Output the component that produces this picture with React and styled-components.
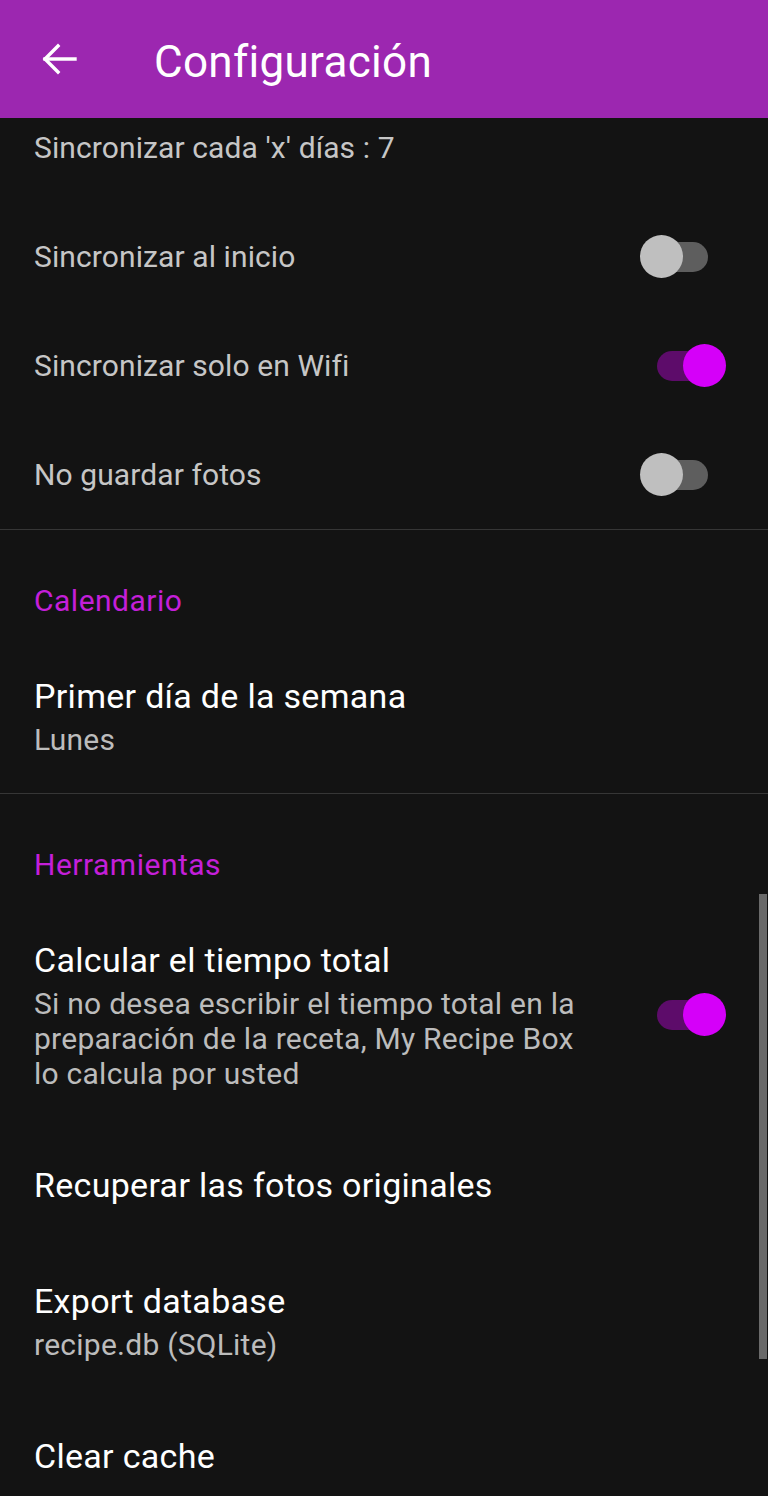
import React from "react";
import styled, { createGlobalStyle } from "styled-components";

const GlobalStyle = createGlobalStyle`
	html, body {
		margin: 0;
		padding: 0;
		background: #131313;
	}
	body {
		font-family: Roboto, "Noto Sans", sans-serif;
	}
`;

const Screen = styled.div`
	position: relative;
	width: 768px;
	height: 1496px;
	display: flex;
	flex-flow: column nowrap;
	background: #131313;
	overflow: hidden;
`;

const AppBar = styled.header`
	flex: 0 0 118px;
	display: flex;
	align-items: center;
	background: #9c27b0;
	padding-left: 35px;
	gap: 71px;
	z-index: 1;
`;

const Title = styled.h1`
	margin: 0;
	padding-top: 5px;
	color: #fff;
	font-size: 44px;
	font-weight: 400;
	letter-spacing: 0.3px;
`;

const Content = styled.div`
	flex: 1;
	overflow: hidden;
`;

// list is scrolled a little, first row sits under the app bar
const List = styled.div`
	margin-top: -25px;
	display: flex;
	flex-flow: column nowrap;
`;

const Row = styled.div`
	display: flex;
	flex-flow: row nowrap;
	align-items: center;
	justify-content: space-between;
	padding: 36px 42px 36px 34px;
	gap: 24px;
`;

const Texts = styled.div`
	display: flex;
	flex-flow: column nowrap;
	flex: 1;
	max-width: ${(p) => (p.$narrow ? "560px" : "none")};
`;

const ItemTitle = styled.div`
	color: ${(p) => (p.$disabled ? "#c6c6c6" : "#ffffff")};
	font-size: ${(p) => (p.$small ? "30px" : "34px")};
	line-height: ${(p) => (p.$small ? "37px" : "44px")};
	letter-spacing: ${(p) => (p.$small ? "0.1px" : "0.3px")};
`;

const Summary = styled.div`
	margin-top: 4px;
	color: #bcbcbc;
	font-size: 30px;
	line-height: 35px;
	letter-spacing: 0.25px;
`;

const Category = styled.div`
	border-top: 1px solid #363636;
	padding: 54px 34px 20px;
	color: #c41fd9;
	font-size: 30px;
	line-height: 34px;
	letter-spacing: 0.5px;
`;

const SwitchBox = styled.div`
	position: relative;
	flex: 0 0 86px;
	height: 30px;
`;

const Track = styled.div`
	position: absolute;
	left: 17px;
	top: 0;
	width: 51px;
	height: 30px;
	border-radius: 15px;
	background: ${(p) => (p.$on ? "#5d0c6a" : "#5e5e5e")};
`;

const Thumb = styled.div`
	position: absolute;
	top: -6.5px;
	left: ${(p) => (p.$on ? "43px" : "0")};
	width: 43px;
	height: 43px;
	border-radius: 50%;
	background: ${(p) => (p.$on ? "#d500f9" : "#bfbfbf")};
`;

const Scrollbar = styled.div`
	position: absolute;
	right: 1px;
	top: 894px;
	width: 8px;
	height: 465px;
	background: #6a6a6a;
`;

const BackArrow = () => (
	<svg width="48" height="48" viewBox="0 0 24 24" fill="none" stroke="#fff" strokeWidth="1.7" strokeLinecap="square">
		<path d="M20 12H5" />
		<path d="M11.5 5.5L5 12l6.5 6.5" />
	</svg>
);

const Switch = ({ on }) => (
	<SwitchBox>
		<Track $on={on} />
		<Thumb $on={on} />
	</SwitchBox>
);

const App = () => {
	return (
		<Screen>
			<GlobalStyle />
			<AppBar>
				<BackArrow />
				<Title>Configuración</Title>
			</AppBar>
			<Content>
				<List>
					<Row>
						<Texts>
							<ItemTitle $small $disabled>Sincronizar cada 'x' días : 7</ItemTitle>
						</Texts>
					</Row>
					<Row>
						<Texts>
							<ItemTitle $small $disabled>Sincronizar al inicio</ItemTitle>
						</Texts>
						<Switch on={false} />
					</Row>
					<Row>
						<Texts>
							<ItemTitle $small $disabled>Sincronizar solo en Wifi</ItemTitle>
						</Texts>
						<Switch on={true} />
					</Row>
					<Row>
						<Texts>
							<ItemTitle $small $disabled>No guardar fotos</ItemTitle>
						</Texts>
						<Switch on={false} />
					</Row>

					<Category>Calendario</Category>
					<Row>
						<Texts>
							<ItemTitle>Primer día de la semana</ItemTitle>
							<Summary>Lunes</Summary>
						</Texts>
					</Row>

					<Category>Herramientas</Category>
					<Row>
						<Texts $narrow>
							<ItemTitle>Calcular el tiempo total</ItemTitle>
							<Summary>
								Si no desea escribir el tiempo total en la preparación de la receta, My Recipe Box lo calcula por usted
							</Summary>
						</Texts>
						<Switch on={true} />
					</Row>
					<Row>
						<Texts>
							<ItemTitle>Recuperar las fotos originales</ItemTitle>
						</Texts>
					</Row>
					<Row>
						<Texts>
							<ItemTitle>Export database</ItemTitle>
							<Summary>recipe.db (SQLite)</Summary>
						</Texts>
					</Row>
					<Row>
						<Texts>
							<ItemTitle>Clear cache</ItemTitle>
						</Texts>
					</Row>
				</List>
			</Content>
			<Scrollbar />
		</Screen>
	);
};

export default App;
